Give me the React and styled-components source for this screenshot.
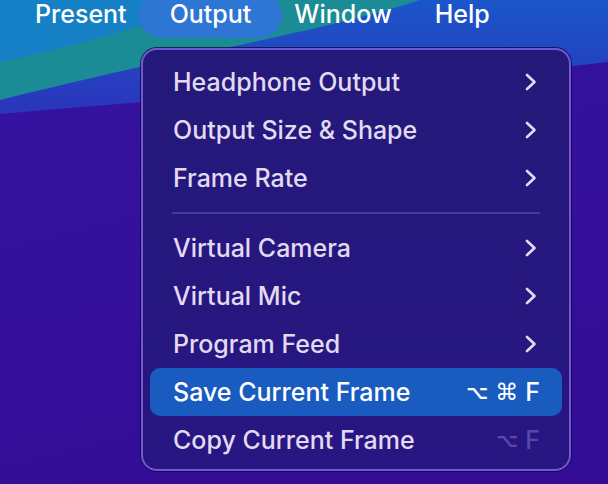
import React from 'react';
import styled, { createGlobalStyle } from 'styled-components';

const GlobalStyle = createGlobalStyle`
  html, body {
    margin: 0;
    padding: 0;
  }
  body {
    width: 608px;
    height: 484px;
    overflow: hidden;
    background: #33119c;
    font-family: Inter, "Liberation Sans", sans-serif;
    -webkit-font-smoothing: antialiased;
  }
`;

const menuBar = ['Present', 'Output', 'Window', 'Help'];

const items = [
  { label: 'Headphone Output', submenu: true },
  { label: 'Output Size & Shape', submenu: true },
  { label: 'Frame Rate', submenu: true },
  { separator: true },
  { label: 'Virtual Camera', submenu: true },
  { label: 'Virtual Mic', submenu: true },
  { label: 'Program Feed', submenu: true },
  { label: 'Save Current Frame', keys: ['⌥', '⌘', 'F'], active: true },
  { label: 'Copy Current Frame', keys: ['⌥', 'F'], dim: true },
];

const Wallpaper = () => (
  <Backdrop viewBox='0 0 608 484' preserveAspectRatio='none'>
    <defs>
      <linearGradient id='band' x1='0' y1='0' x2='0' y2='1'>
        <stop offset='0' stopColor='#1a56ca' />
        <stop offset='1' stopColor='#2b34bb' />
      </linearGradient>
      <linearGradient id='deep' x1='0' y1='0' x2='0.3' y2='1'>
        <stop offset='0' stopColor='#3414a2' />
        <stop offset='1' stopColor='#330d96' />
      </linearGradient>
    </defs>
    <rect width='608' height='484' fill='url(#deep)' />
    <path d='M0 0 H608 V62 C450 80 250 92 0 114 Z' fill='url(#band)' />
    <path d='M0 0 H420 C330 30 200 50 0 100 Z' fill='#1b8b96' />
    <path d='M0 0 H215 C150 25 80 45 0 62 Z' fill='#1580c6' />
  </Backdrop>
);

const Chevron = () => (
  <ChevronIcon viewBox='0 0 16 18'>
    <path d='M4 2 L11.5 9 L4 16' fill='none' stroke='currentColor' strokeWidth='2.6' strokeLinecap='round' strokeLinejoin='round' />
  </ChevronIcon>
);

const App = () => (
  <>
    <GlobalStyle />
    <Screen>
      <Wallpaper />
      <Content>
        <MenuBar>
          {menuBar.map(title => (
            <MenuTitle key={title} active={title === 'Output'}>{title}</MenuTitle>
          ))}
        </MenuBar>
        <Dropdown>
          {items.map((item, i) => {
            if (item.separator) {
              return <Separator key={i} />;
            }
            return (
              <Row key={i} active={item.active}>
                <span>{item.label}</span>
                {item.submenu ? <Chevron /> : null}
                {item.keys
                  ? <Shortcut dim={item.dim}>
                    {item.keys.map(k => <Key key={k} kind={k === 'F' ? 'letter' : k === '⌥' ? 'option' : 'cmd'}>{k}</Key>)}
                  </Shortcut>
                  : null}
              </Row>
            );
          })}
        </Dropdown>
      </Content>
    </Screen>
  </>
);

const Screen = styled.div`
  position: relative;
  width: 608px;
  height: 484px;
  overflow: hidden;
`;

const Backdrop = styled.svg`
  position: absolute;
  inset: 0;
  width: 608px;
  height: 484px;
  display: block;
`;

const Content = styled.div`
  position: relative;
  display: flex;
  flex-direction: column;
`;

const MenuBar = styled.div`
  display: flex;
  align-items: flex-start;
  height: 38px;
  padding-left: 35px;
  gap: 43px;
`;

const MenuTitle = styled.div`
  font-size: 25px;
  font-weight: 500;
  line-height: 29px;
  color: #ffffff;
  white-space: nowrap;
  ${({ active }) => active && `
    background: #2e76d3;
    margin: -8px -31px 0;
    padding: 8px 31px 9px;
    border-radius: 23px;
  `}
`;

const Dropdown = styled.div`
  box-sizing: border-box;
  width: 430px;
  height: 423px;
  margin: 10px 0 0 141px;
  padding: 8px 7px 5px;
  border: 2px solid #7356d6;
  border-radius: 16px;
  box-shadow: 0 0 0 1px rgba(16, 8, 50, 0.75);
  background: linear-gradient(180deg, #24197a 0%, #281682 100%);
  display: flex;
  flex-direction: column;
`;

const Row = styled.div`
  display: flex;
  align-items: center;
  justify-content: space-between;
  height: 48px;
  flex-shrink: 0;
  padding: 0 22px 0 23px;
  border-radius: 10px;
  font-size: 25px;
  font-weight: 500;
  color: ${({ active }) => (active ? '#ffffff' : '#e2daf1')};
  background: ${({ active }) => (active ? '#1a5bbf' : 'transparent')};
  white-space: nowrap;
`;

const ChevronIcon = styled.svg`
  width: 16px;
  height: 18px;
  margin-right: 1px;
  color: #e2daf1;
`;

const Separator = styled.div`
  height: 22px;
  flex-shrink: 0;
  margin: 0 22px;
  display: flex;
  align-items: center;
  &::after {
    content: '';
    flex: 1;
    height: 2px;
    background: #48399c;
  }
`;

const Shortcut = styled.div`
  display: flex;
  align-items: center;
  gap: 7px;
  color: ${({ dim }) => (dim ? '#5a48a8' : '#ffffff')};
`;

const keySizes = { letter: '25px', option: '19px', cmd: '23px' };

const Key = styled.span`
  font-family: ${({ kind }) => (kind === 'letter' ? 'Inter, "Liberation Sans", sans-serif' : '"DejaVu Sans", sans-serif')};
  font-size: ${({ kind }) => keySizes[kind]};
  font-weight: ${({ kind }) => (kind === 'option' ? 'bold' : '500')};
  line-height: 29px;
`;

export default App;
